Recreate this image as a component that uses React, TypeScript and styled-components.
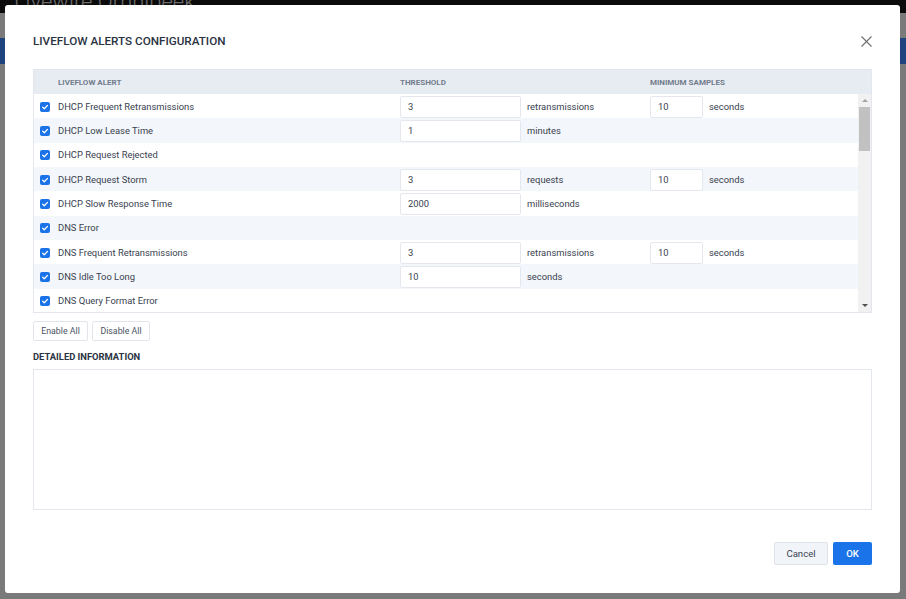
import React from "react"
import styled, { createGlobalStyle } from "styled-components"

interface Field {
  value: string
  unit: string
}

interface Alert {
  name: string
  threshold?: Field
  samples?: Field
}

const alerts: Alert[] = [
  {
    name: "DHCP Frequent Retransmissions",
    threshold: { value: "3", unit: "retransmissions" },
    samples: { value: "10", unit: "seconds" },
  },
  { name: "DHCP Low Lease Time", threshold: { value: "1", unit: "minutes" } },
  { name: "DHCP Request Rejected" },
  {
    name: "DHCP Request Storm",
    threshold: { value: "3", unit: "requests" },
    samples: { value: "10", unit: "seconds" },
  },
  {
    name: "DHCP Slow Response Time",
    threshold: { value: "2000", unit: "milliseconds" },
  },
  { name: "DNS Error" },
  {
    name: "DNS Frequent Retransmissions",
    threshold: { value: "3", unit: "retransmissions" },
    samples: { value: "10", unit: "seconds" },
  },
  { name: "DNS Idle Too Long", threshold: { value: "10", unit: "seconds" } },
  { name: "DNS Query Format Error" },
  { name: "DNS Query Refused" },
  {
    name: "DNS Slow Response Time",
    threshold: { value: "2000", unit: "milliseconds" },
  },
  { name: "HTTP Client Error" },
]

const Checkbox = () => (
  <svg width="10" height="10" viewBox="0 0 10 10">
    <rect width="10" height="10" rx="2" fill="#1a73e8" />
    <path
      d="M2.6 5.1 L4.3 6.8 L7.5 3.4"
      fill="none"
      stroke="#fff"
      strokeWidth="1.3"
      strokeLinecap="round"
      strokeLinejoin="round"
    />
  </svg>
)

const CloseIcon = () => (
  <svg width="11" height="11" viewBox="0 0 11 11">
    <path d="M0.5 0.5 L10.5 10.5 M10.5 0.5 L0.5 10.5" stroke="#6e6e6e" strokeWidth="1.1" />
  </svg>
)

const App = () => {
  return (
    <>
      <GlobalStyle />
      <Page>
        <TopBar>
          <AppTitle>Livewire Omnipeek</AppTitle>
        </TopBar>
        <SubBar />
        <Toolbar />
      </Page>

      <Overlay>
        <Modal>
          <Header>
            <Title>LIVEFLOW ALERTS CONFIGURATION</Title>
            <CloseIcon />
          </Header>

          <Table>
            <HeadRow>
              <span />
              <HeadCell>Liveflow Alert</HeadCell>
              <HeadCell>Threshold</HeadCell>
              <HeadCell>Minimum Samples</HeadCell>
            </HeadRow>
            <Body>
              <Rows>
                {alerts.map((a) => (
                  <Row key={a.name}>
                    <CheckCell>
                      <Checkbox />
                    </CheckCell>
                    <Name>{a.name}</Name>
                    <FieldCell>
                      {a.threshold && (
                        <>
                          <Input $width={121}>{a.threshold.value}</Input>
                          <Unit>{a.threshold.unit}</Unit>
                        </>
                      )}
                    </FieldCell>
                    <FieldCell>
                      {a.samples && (
                        <>
                          <Input $width={53}>{a.samples.value}</Input>
                          <Unit>{a.samples.unit}</Unit>
                        </>
                      )}
                    </FieldCell>
                  </Row>
                ))}
              </Rows>
              <Scrollbar>
                <Arrow $up />
                <Thumb />
                <Track />
                <Arrow />
              </Scrollbar>
            </Body>
          </Table>

          <Actions>
            <SmallButton $width={55}>Enable All</SmallButton>
            <SmallButton $width={58}>Disable All</SmallButton>
          </Actions>

          <SectionTitle>DETAILED INFORMATION</SectionTitle>
          <Details />

          <Footer>
            <CancelButton>Cancel</CancelButton>
            <OkButton>OK</OkButton>
          </Footer>
        </Modal>
      </Overlay>
    </>
  )
}

export default App

const GlobalStyle = createGlobalStyle`
  html, body {
    margin: 0;
    padding: 0;
    width: 906px;
    height: 599px;
    overflow: hidden;
    font-family: Roboto, "Liberation Sans", sans-serif;
  }
  * { box-sizing: border-box; }
`

const Page = styled.div`
  width: 906px;
  height: 599px;
  background: #f4f4f4;
  display: flex;
  flex-direction: column;
`

const TopBar = styled.div`
  height: 13px;
  background: #161616;
  padding-left: 14px;
  overflow: hidden;
`

const AppTitle = styled.div`
  font-size: 22px;
  font-weight: 300;
  color: #d8d8d8;
  line-height: 16px;
  margin-top: -6px;
`

const SubBar = styled.div`
  height: 25px;
`

const Toolbar = styled.div`
  height: 26px;
  background: #3c86ff;
`

const Overlay = styled.div`
  position: fixed;
  inset: 0;
  background: rgba(0, 0, 0, 0.5);
  padding: 5px 6px 6px 5px;
`

const Modal = styled.div`
  width: 895px;
  height: 588px;
  background: #fff;
  border-radius: 3px;
  padding: 0 28px;
  display: flex;
  flex-direction: column;
  color: #3b4452;
`

const Header = styled.div`
  height: 64px;
  padding-top: 8px;
  display: flex;
  align-items: center;
  justify-content: space-between;
`

const Title = styled.div`
  font-size: 11.7px;
  font-weight: 500;
  color: #2a3342;
`

const Table = styled.div`
  border: 1px solid #e3e7ed;
  display: flex;
  flex-direction: column;
`

const columns = "24px 342px 250px 1fr"

const HeadRow = styled.div`
  height: 24px;
  background: #e7ecf3;
  display: grid;
  grid-template-columns: ${columns};
  align-items: center;
`

const HeadCell = styled.div`
  font-size: 8px;
  font-weight: 700;
  text-transform: uppercase;
  color: #727c8b;
`

const Body = styled.div`
  height: 218px;
  display: flex;
  overflow: hidden;
`

const Rows = styled.div`
  flex: 1;
  display: flex;
  flex-direction: column;
`

const Row = styled.div`
  flex: 0 0 24.33px;
  display: grid;
  grid-template-columns: ${columns};
  align-items: center;
  background: #fff;
  font-size: 9.4px;
  color: #38414f;

  &:nth-child(even) {
    background: #f3f6fa;
  }
`

const CheckCell = styled.div`
  display: flex;
  align-items: center;
  padding-left: 6px;
  padding-top: 1px;
`

const Name = styled.div`
  white-space: nowrap;
`

const FieldCell = styled.div`
  display: flex;
  align-items: center;
  gap: 6px;
  height: 100%;
  padding-top: 1px;
`

const Input = styled.div<{ $width: number }>`
  width: ${(p) => p.$width}px;
  height: 22px;
  background: #fff;
  border: 1px solid #e4e8ee;
  border-radius: 2px;
  padding-left: 7px;
  display: flex;
  align-items: center;
  font-size: 9.4px;
  color: #38414f;
`

const Unit = styled.span`
  white-space: nowrap;
`

const Scrollbar = styled.div`
  width: 13px;
  background: #f1f1f1;
  display: flex;
  flex-direction: column;
  align-items: center;
`

const Arrow = styled.div<{ $up?: boolean }>`
  width: 0;
  height: 0;
  flex: 0 0 3px;
  border-left: 3px solid transparent;
  border-right: 3px solid transparent;
  ${(p) =>
    p.$up
      ? `border-bottom: 3px solid #a3a3a3;
         margin: 5px 0 5px;`
      : `border-top: 3px solid #505050;
         margin-bottom: 5px;`}
`

const Thumb = styled.div`
  width: 11px;
  flex: 0 0 44px;
  background: #c1c1c1;
`

const Track = styled.div`
  flex: 1;
`

const Actions = styled.div`
  margin-top: 8px;
  display: flex;
  gap: 4px;
`

const SmallButton = styled.div<{ $width: number }>`
  width: ${(p) => p.$width}px;
  height: 20px;
  border: 1px solid #e2e6ec;
  border-radius: 2px;
  background: #fff;
  display: flex;
  align-items: center;
  justify-content: center;
  font-size: 8.8px;
  line-height: 1;
  white-space: nowrap;
  color: #4a5363;
`

const SectionTitle = styled.div`
  margin-top: 10px;
  height: 12px;
  line-height: 12px;
  font-size: 9.4px;
  font-weight: 700;
  color: #2a3342;
`

const Details = styled.div`
  margin-top: 6px;
  height: 141px;
  border: 1px solid #e3e7ed;
`

const Footer = styled.div`
  margin-top: 32px;
  display: flex;
  justify-content: flex-end;
  gap: 5px;
`

const CancelButton = styled.div`
  width: 54px;
  height: 23px;
  border: 1px solid #dfe4eb;
  border-radius: 2px;
  background: #f1f4f8;
  display: flex;
  align-items: center;
  justify-content: center;
  font-size: 9.6px;
  color: #3b4452;
`

const OkButton = styled.div`
  width: 39px;
  height: 23px;
  border-radius: 2px;
  background: #1a73e8;
  display: flex;
  align-items: center;
  justify-content: center;
  font-size: 9.6px;
  font-weight: 500;
  color: #fff;
`
